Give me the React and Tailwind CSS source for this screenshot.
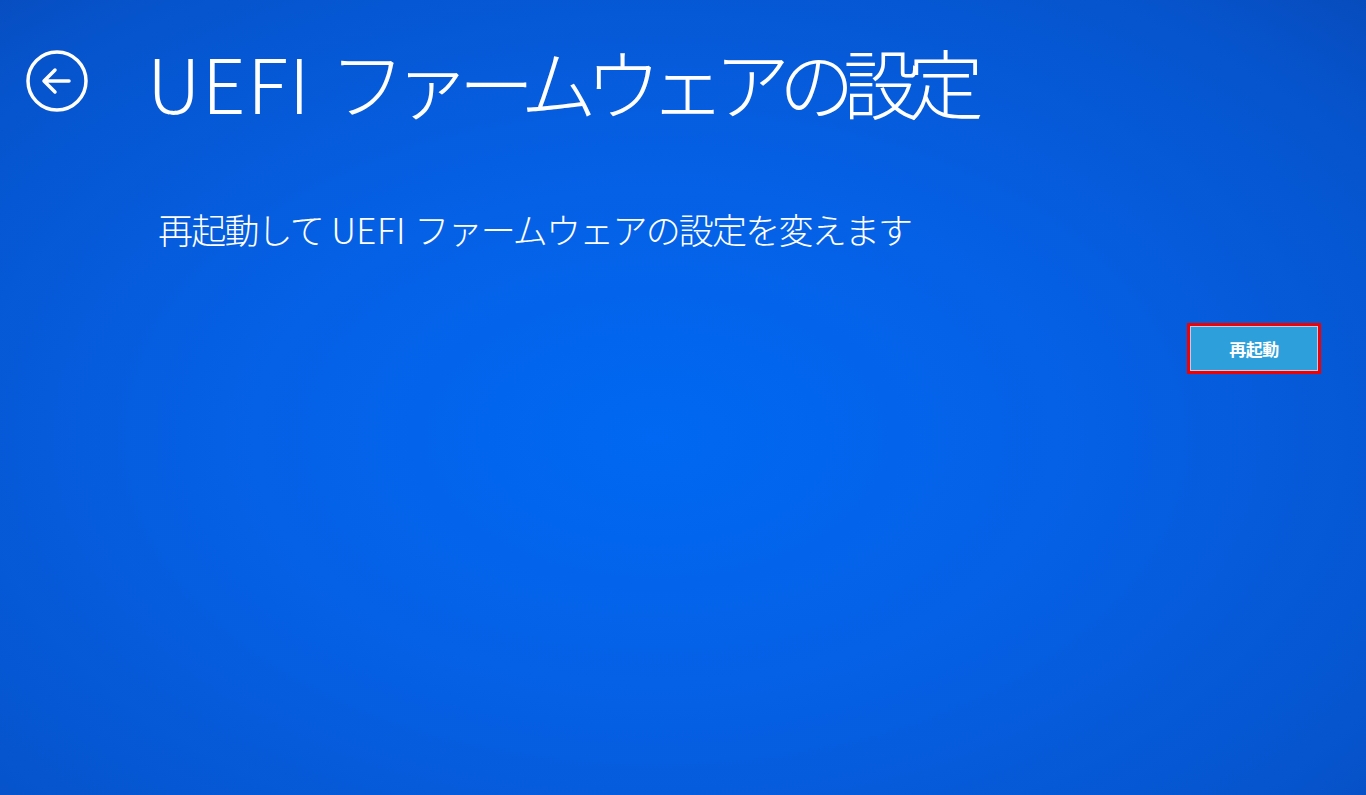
import React from 'react'

const BackIcon = () => (
  <svg width="64" height="64" viewBox="0 0 64 64" fill="none">
    <circle cx="32" cy="32" r="29" stroke="white" strokeWidth="3.5" />
    <path d="M44 32H20M30 21L19 32l11 11" stroke="white" strokeWidth="3.5" strokeLinecap="round" strokeLinejoin="round" />
  </svg>
)

export default function App() {
  return (
    <div
      className="w-[1366px] h-[795px] overflow-hidden text-white bg-[radial-gradient(ellipse_at_48%_55%,#0068f2_0%,#0561e6_40%,#0654cd_85%,#074cbd_100%)]"
      style={{ fontFamily: '"Noto Sans CJK JP", "Noto Sans", sans-serif' }}
    >
      {/* Header */}
      <div className="flex items-center pt-[36px] pl-[25px]">
        <BackIcon />
        <h1 className="ml-[58px] text-[76px] leading-[90px] font-light">
          <span className="tracking-[1.5px]">UEFI </span>
          <span className="tracking-[-11.5px]">ファームウェアの設定</span>
        </h1>
      </div>

      {/* Content */}
      <p className="mt-[81px] ml-[158px] text-[35px] leading-[44px] font-light">
        <span className="tracking-[-1.8px]">再起動して</span>
        <span className="tracking-[0.5px]"> UEFI </span>
        <span className="tracking-[-1.8px]">ファームウェアの設定を変えます</span>
      </p>

      {/* Button */}
      <div className="flex justify-end pr-[45px] mt-[72px]">
        <div className="border-[3px] border-[#f00000] p-px bg-white/70">
          <button className="w-[126px] h-[43px] bg-[#2d9fdb] text-[17px] font-bold text-white tracking-[-0.5px]">
            再起動
          </button>
        </div>
      </div>
    </div>
  )
}
